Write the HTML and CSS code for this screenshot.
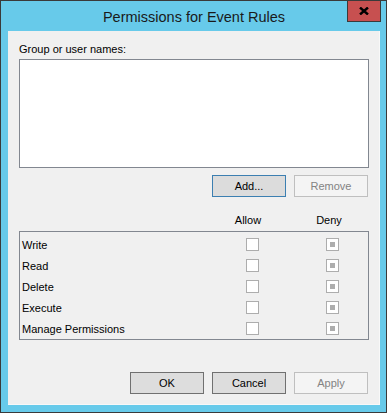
FILE: index.html
```html
<!DOCTYPE html>
<html lang="en">
<head>
    <meta charset="UTF-8">
    <title>Permissions for Event Rules</title>
    <link rel="stylesheet" href="styles.css">
</head>
<body>
    <div class="window">
        <div class="titlebar">
            <span class="title">Permissions for Event Rules</span>
            <button class="close-button">
                <svg width="10" height="8" viewBox="0 0 10 8">
                    <path d="M1 0.5 L9 7.5 M9 0.5 L1 7.5" stroke="#000" stroke-width="2.4" fill="none"/>
                </svg>
            </button>
        </div>
        <div class="content">
            <div class="label">Group or user names:</div>
            <div class="list-box"></div>
            <div class="button-row">
                <button class="btn btn-default">Add...</button>
                <button class="btn" disabled>Remove</button>
            </div>

            <div class="perm-header">
                <span class="col-head">Allow</span>
                <span class="col-head">Deny</span>
            </div>
            <div class="perm-box">
                <div class="perm-row">
                    <span class="perm-name">Write</span>
                    <span class="check"></span>
                    <span class="check mixed"></span>
                </div>
                <div class="perm-row">
                    <span class="perm-name">Read</span>
                    <span class="check"></span>
                    <span class="check mixed"></span>
                </div>
                <div class="perm-row">
                    <span class="perm-name">Delete</span>
                    <span class="check"></span>
                    <span class="check mixed"></span>
                </div>
                <div class="perm-row">
                    <span class="perm-name">Execute</span>
                    <span class="check"></span>
                    <span class="check mixed"></span>
                </div>
                <div class="perm-row">
                    <span class="perm-name">Manage Permissions</span>
                    <span class="check"></span>
                    <span class="check mixed"></span>
                </div>
            </div>

            <div class="button-row bottom">
                <button class="btn btn-dark">OK</button>
                <button class="btn btn-dark">Cancel</button>
                <button class="btn" disabled>Apply</button>
            </div>
        </div>
    </div>
</body>
</html>
```

FILE: styles.css
```css
body, html {
    margin: 0;
    background-color: #ffffff;
}
.window {
    width: 387px;
    height: 413px;
    box-sizing: border-box;
    border: 1px solid #3a3a3a;
    background-color: #67caea;
    padding: 0 6px 7px 7px;
    display: flex;
    flex-direction: column;
    position: relative;
    font-family: "Liberation Sans", Arial, sans-serif;
}
.titlebar {
    height: 30px;
    display: flex;
    align-items: center;
    justify-content: center;
}
.title {
    font-size: 14.5px;
    color: #1a1a1a;
    margin-top: 1px;
}
.close-button {
    position: absolute; /* кнопка лежит поверх рамки окна */
    top: -1px;
    right: 5px;
    width: 34px;
    height: 22px;
    padding: 0;
    background-color: #c75050;
    border: 1px solid #3a3a3a;
    display: flex;
    align-items: center;
    justify-content: center;
}
.content {
    flex: 1;
    background-color: #f0f0f0;
    border-right: 1px solid #f8f8f8;
    border-bottom: 1px solid #f8f8f8;
    padding: 10px 10px 10px 11px;
    display: flex;
    flex-direction: column;
    font-size: 11px;
    color: #000;
}
.label {
    line-height: 16px;
}
.list-box {
    margin-top: 2px;
    height: 109px;
    box-sizing: border-box;
    border: 1px solid #828790;
    background-color: #ffffff;
}
.button-row {
    display: flex;
    justify-content: flex-end;
    gap: 8px;
    margin-top: 7px;
    padding-right: 1px;
}
.button-row.bottom {
    margin-top: auto;
}
.btn {
    width: 74px;
    height: 22px;
    box-sizing: border-box;
    padding: 0;
    font-family: inherit;
    font-size: 11px;
    color: #000;
    background-color: #e1e1e1;
    border: 1px solid #adadad;
}
.btn-default {
    background-color: #dcdcdc;
    border-color: #3c7fb1;
}
.btn-dark {
    background-color: #dddddd;
    border-color: #707070;
}
.btn:disabled {
    background-color: #f4f4f4;
    border-color: #bfbfbf;
    color: #838383;
}
.perm-header {
    display: flex;
    justify-content: flex-end;
    gap: 41px;
    padding-right: 20px;
    margin-top: 15px;
    line-height: 16px;
}
.col-head {
    width: 40px;
    text-align: center;
}
.perm-box {
    margin-top: 3px;
    height: 109px;
    box-sizing: border-box;
    border: 1px solid #828790;
    padding: 2px 16px 0 2px;
}
.perm-row {
    height: 21px;
    display: grid;
    grid-template-columns: 1fr 40px 40px;
    column-gap: 40px;
    align-items: center;
    justify-items: center;
}
.perm-name {
    justify-self: start;
}
.check {
    width: 13px;
    height: 13px;
    box-sizing: border-box;
    border: 1px solid #adadad;
    background-color: #ffffff;
    display: flex;
    align-items: center;
    justify-content: center;
}
.check.mixed::after {
    content: '';
    width: 5px;
    height: 5px;
    background-color: #adadad;
}
```
